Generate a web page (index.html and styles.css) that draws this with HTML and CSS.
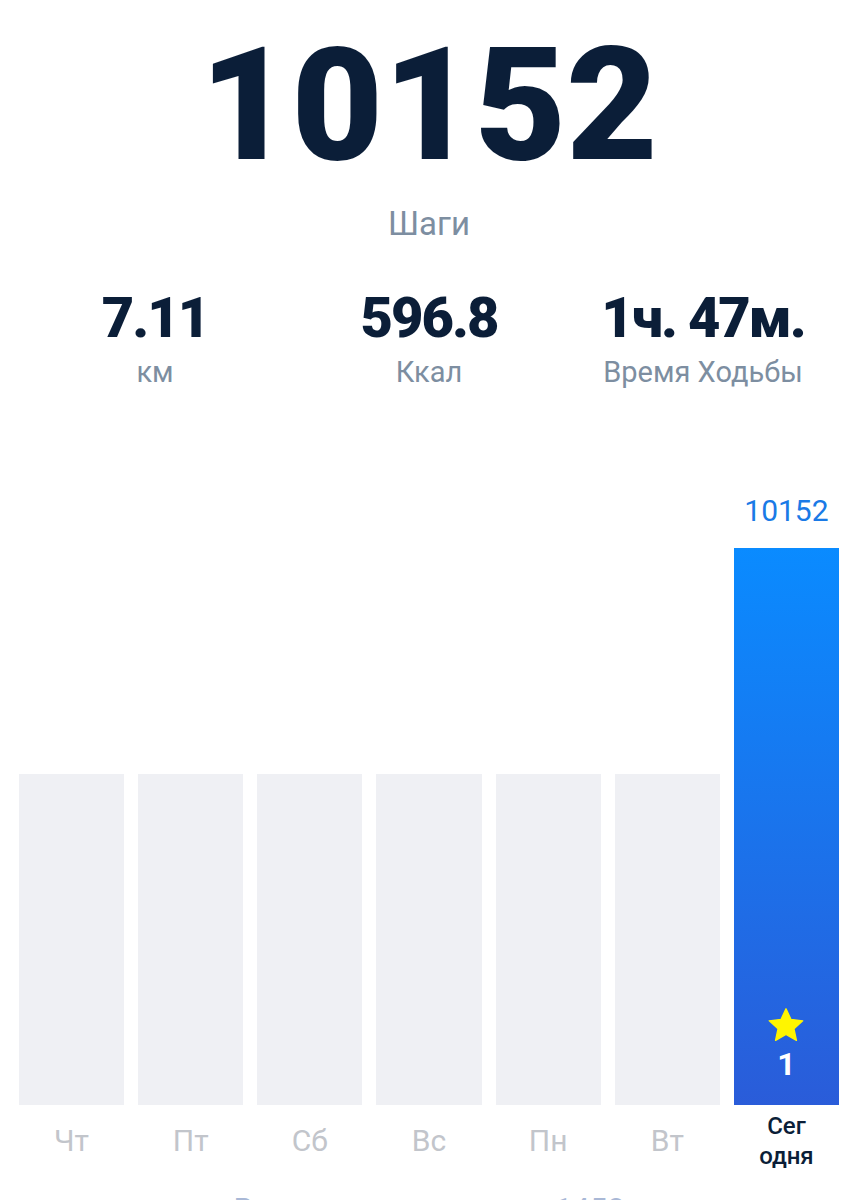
FILE: index.html
```html
<!DOCTYPE html>
<html lang="ru">
<head>
    <meta charset="UTF-8">
    <meta name="viewport" content="width=device-width, initial-scale=1.0">
    <title>Шаги</title>
    <link rel="stylesheet" href="styles.css">
</head>
<body>
    <div class="page">
        <div class="total">
            <div class="total-value">10152</div>
            <div class="total-label">Шаги</div>
        </div>

        <div class="stats">
            <div class="stat">
                <div class="stat-value">7.11</div>
                <div class="stat-label">км</div>
            </div>
            <div class="stat">
                <div class="stat-value">596.8</div>
                <div class="stat-label">Ккал</div>
            </div>
            <div class="stat">
                <div class="stat-value">1ч. 47м.</div>
                <div class="stat-label">Время Ходьбы</div>
            </div>
        </div>

        <div class="chart">
            <div class="col"><div class="bar" style="height: 331px"></div></div>
            <div class="col"><div class="bar" style="height: 331px"></div></div>
            <div class="col"><div class="bar" style="height: 331px"></div></div>
            <div class="col"><div class="bar" style="height: 331px"></div></div>
            <div class="col"><div class="bar" style="height: 331px"></div></div>
            <div class="col"><div class="bar" style="height: 331px"></div></div>
            <div class="col">
                <div class="bar-value">10152</div>
                <div class="bar bar-today" style="height: 557px">
                    <svg class="star" viewBox="0 0 24 24" width="42" height="42">
                        <path d="M12 2.2l2.85 6.1 6.7.75-5 4.55 1.4 6.6L12 16.85 6.05 20.2l1.4-6.6-5-4.55 6.7-.75z" fill="#fff500" stroke="#fff500" stroke-width="0.8" stroke-linejoin="round"/>
                    </svg>
                    <div class="bar-count">1</div>
                </div>
            </div>

            <div class="day">Чт</div>
            <div class="day">Пт</div>
            <div class="day">Сб</div>
            <div class="day">Вс</div>
            <div class="day">Пн</div>
            <div class="day">Вт</div>
            <div class="day day-today">Сег<br>одня</div>
        </div>

        <div class="average">В среднем за неделю 1458</div>
    </div>
</body>
</html>
```

FILE: styles.css
```css
body {
    margin: 0;
    background-color: #fff;
    font-family: Roboto, "Noto Sans", Arial, sans-serif;
}

.page {
    height: 1200px;
    overflow: hidden;
}

.total {
    text-align: center;
    padding-top: 26px;
}

.total-value {
    font-size: 158px;
    font-weight: 900;
    line-height: 1;
    color: #0b1e38;
}

.total-label {
    margin-top: 22px;
    font-size: 33px;
    line-height: 36px;
    color: #7d8ea1;
}

.stats {
    display: grid;
    grid-template-columns: repeat(3, 1fr);
    padding: 0 18px;
    margin-top: 44px;
    text-align: center;
}

.stat-value {
    font-size: 56px;
    font-weight: 900;
    line-height: 64px;
    letter-spacing: -2px;
    color: #0b1e38;
}

.stat-label {
    font-size: 29px;
    line-height: 44px;
    color: #7d8ea1;
}

.chart {
    display: grid;
    grid-template-columns: repeat(7, 1fr);
    column-gap: 14px;
    padding: 0 19px;
    margin-top: 100px;
    align-items: end;
}

.col {
    display: flex;
    flex-direction: column;
    align-items: stretch;
}

.bar {
    background-color: #eff0f4;
}

.bar-value {
    text-align: center;
    font-size: 30px;
    line-height: 34px;
    margin-bottom: 20px;
    color: #1a7ae6;
}

.bar-today {
    background: linear-gradient(to bottom, #0a8bff, #2a5cd9);
    display: flex;
    flex-direction: column;
    align-items: center;
    justify-content: flex-end;
    padding-bottom: 24px;
    box-sizing: border-box;
}

.bar-count {
    font-size: 32px;
    font-weight: 700;
    line-height: 34px;
    color: #fff;
}

.day {
    align-self: start;
    text-align: center;
    padding-top: 18px;
    font-size: 30px;
    line-height: 36px;
    color: #c2c5cb;
}

.day-today {
    padding-top: 6px;
    font-size: 24px;
    font-weight: 500;
    line-height: 30px;
    color: #0b1e38;
}

.average {
    margin-top: 20px;
    text-align: center;
    font-size: 31px;
    color: #a9b8d6;
}
```
